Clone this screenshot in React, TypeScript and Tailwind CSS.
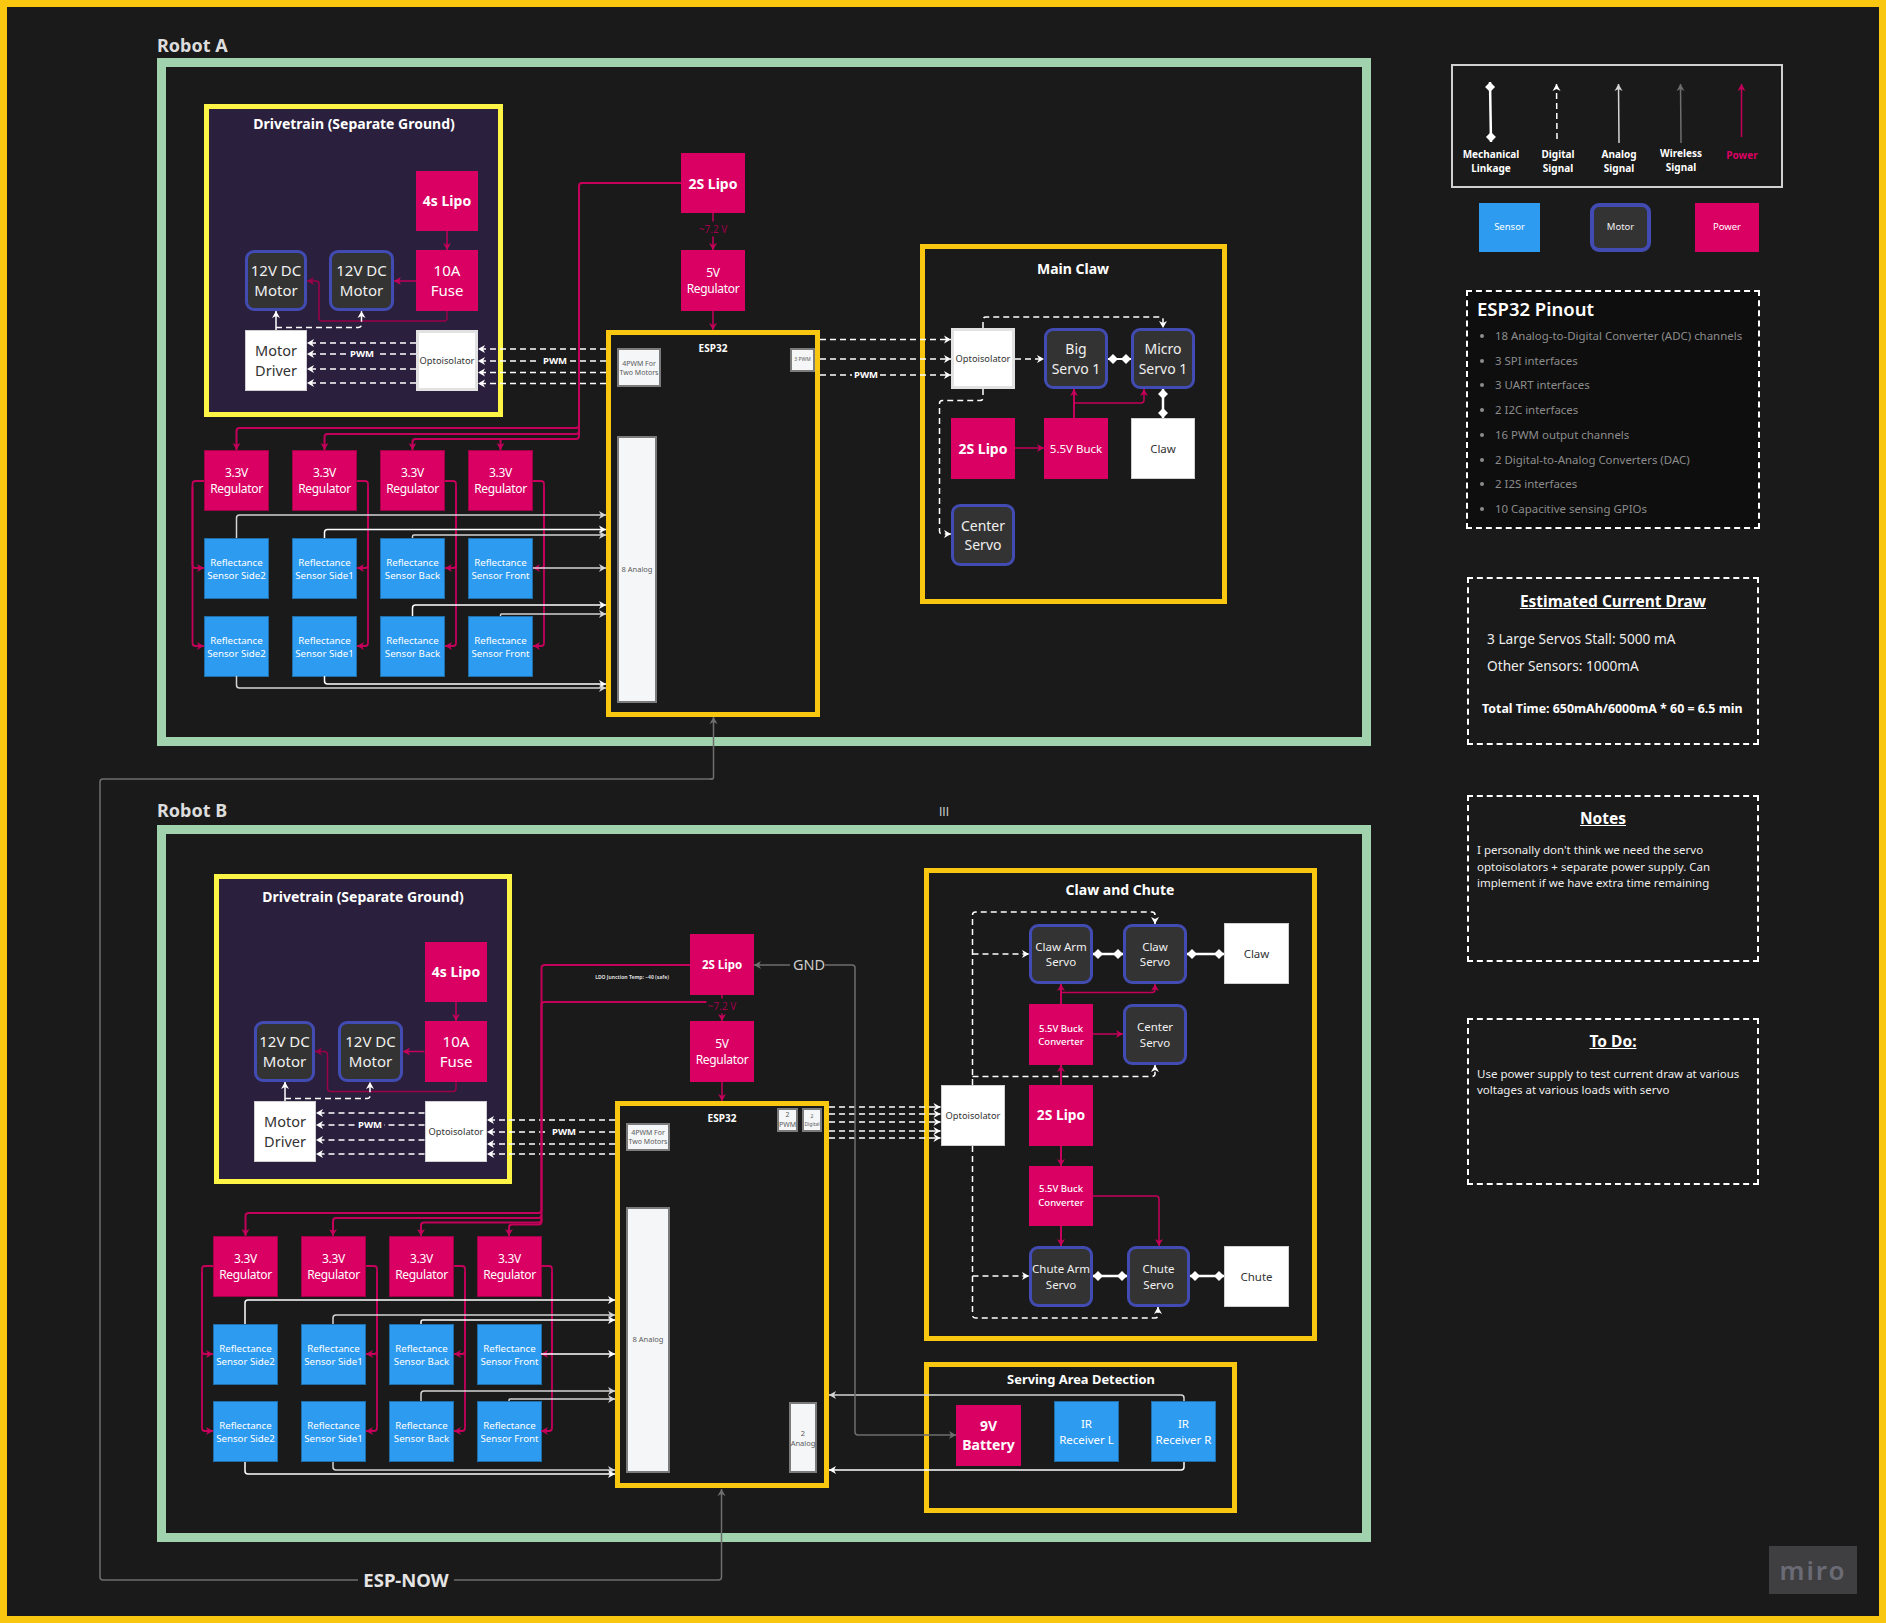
import React from "react";

type Pt = [number, number];
type Conn = { p: Pt[]; c: string; w?: number; d?: boolean; e?: "a" | "d"; s?: "a" | "d"; r?: number };

const PK = "#c4005a";
const WH = "#ffffff";
const LG = "#d4d4d4";
const GR = "#6e6e6e";

function path(pts: Pt[], r = 3): string {
  let out = `M${pts[0][0]} ${pts[0][1]}`;
  for (let i = 1; i < pts.length; i++) {
    const [x, y] = pts[i];
    if (i === pts.length - 1) {
      out += ` L${x} ${y}`;
      break;
    }
    const [px, py] = pts[i - 1];
    const [nx, ny] = pts[i + 1];
    const l1 = Math.hypot(x - px, y - py) || 1;
    const l2 = Math.hypot(nx - x, ny - y) || 1;
    const rr = Math.min(r, l1 / 2, l2 / 2);
    const ax = x - ((x - px) / l1) * rr;
    const ay = y - ((y - py) / l1) * rr;
    const bx = x + ((nx - x) / l2) * rr;
    const by = y + ((ny - y) / l2) * rr;
    out += ` L${ax} ${ay} Q${x} ${y} ${bx} ${by}`;
  }
  return out;
}

function arrowHead(tip: Pt, from: Pt): string {
  const a = Math.atan2(tip[1] - from[1], tip[0] - from[0]);
  const rot = (x: number, y: number): string =>
    `${tip[0] + x * Math.cos(a) - y * Math.sin(a)},${tip[1] + x * Math.sin(a) + y * Math.cos(a)}`;
  return [rot(0, 0), rot(-7, 4), rot(-5, 0), rot(-7, -4)].join(" ");
}

function diamondAt(tip: Pt, from: Pt): string {
  const a = Math.atan2(tip[1] - from[1], tip[0] - from[0]);
  const cx = tip[0] - Math.cos(a) * 5;
  const cy = tip[1] - Math.sin(a) * 5;
  const h = 5;
  return `${cx + h},${cy} ${cx},${cy + h} ${cx - h},${cy} ${cx},${cy - h}`;
}

function Wire({ k }: { k: Conn }) {
  const { p, c, w = 1.5, d, e, s, r } = k;
  return (
    <g>
      <path d={path(p, r ?? 3)} fill="none" stroke={c} strokeWidth={w} strokeDasharray={d ? "6 4" : undefined} />
      {e === "a" && <polygon points={arrowHead(p[p.length - 1], p[p.length - 2])} fill={c} />}
      {e === "d" && <polygon points={diamondAt(p[p.length - 1], p[p.length - 2])} fill={c} />}
      {s === "a" && <polygon points={arrowHead(p[0], p[1])} fill={c} />}
      {s === "d" && <polygon points={diamondAt(p[0], p[1])} fill={c} />}
    </g>
  );
}

const hDash = (x1: number, x2: number, ys: number[]): Conn[] =>
  ys.map((y) => ({ p: [[x1, y], [x2, y]] as Pt[], c: WH, w: 1.5, d: true, e: "a" as const }));

const mech = (a: Pt, b: Pt, w = 2.5): Conn => ({ p: [a, b], c: WH, w, e: "d", s: "d" });

function sensorPower(left: number, right: number[], railL: number, railR: number[], yOut: number, y1: number, y2: number): Conn[] {
  const out: Conn[] = [
    { p: [[left, yOut], [railL, yOut], [railL, y1], [left, y1]], c: PK, w: 1.8, e: "a" },
    { p: [[railL, yOut + 6], [railL, y2], [left, y2]], c: PK, w: 1.8, e: "a" },
  ];
  right.forEach((x, i) => {
    out.push({ p: [[x, yOut], [railR[i], yOut], [railR[i], y1], [x, y1]], c: PK, w: 1.8, e: "a" });
    out.push({ p: [[railR[i], yOut + 6], [railR[i], y2], [x, y2]], c: PK, w: 1.8, e: "a" });
  });
  return out;
}

const conns: Conn[] = [
  // ---- ESP-NOW link
  { p: [[713, 779], [100, 779], [100, 1580], [358, 1580]], c: GR, w: 1.5 },
  { p: [[710, 779], [713.5, 779], [713.5, 717]], c: GR, w: 1.5, e: "a" },
  { p: [[454, 1580], [721.5, 1580], [721.5, 1489]], c: GR, w: 1.5, e: "a" },

  // ---- Robot A drivetrain
  { p: [[447, 231], [447, 250]], c: PK, e: "a" },
  { p: [[416, 281], [394, 281]], c: PK, w: 1.5, e: "a" },
  { p: [[447, 311], [447, 321], [319, 321], [319, 281], [307, 281]], c: "#9a0048", w: 1.5, e: "a" },
  { p: [[276, 330], [276, 311]], c: WH, e: "a" },
  { p: [[276, 327.5], [361.5, 327.5], [361.5, 311]], c: WH, d: true, e: "a" },
  ...hDash(416, 307, [343, 354, 369, 383]),
  ...hDash(606, 478, [349, 361, 372.5, 383.5]),
  ...hDash(820, 951, [339.5, 359, 375]),

  // ---- Robot A main power
  { p: [[681, 183], [579, 183], [579, 428], [236.5, 428], [236.5, 450]], c: PK, w: 2, e: "a" },
  { p: [[579, 425], [579, 434], [324.5, 434], [324.5, 450]], c: PK, w: 2, e: "a" },
  { p: [[579, 430], [579, 439], [412.5, 439], [412.5, 450]], c: PK, w: 2, e: "a" },
  { p: [[500.5, 439], [500.5, 450]], c: PK, w: 2, e: "a" },
  { p: [[713, 213], [713, 250]], c: PK, e: "a" },
  { p: [[713, 311], [713, 330]], c: PK, e: "a" },
  ...sensorPower(204, [357, 445, 533], 192.5, [368, 456, 544], 481, 568, 646),

  // ---- Robot A signals
  { p: [[236.5, 538], [236.5, 515], [606, 515]], c: LG, w: 1.5, e: "a" },
  { p: [[324.5, 538], [324.5, 529.5], [606, 529.5]], c: WH, w: 1.5, e: "a" },
  { p: [[412.5, 538], [412.5, 535], [606, 535]], c: LG, w: 1.5, e: "a" },
  { p: [[533, 568], [606, 568]], c: LG, w: 1.5, e: "a" },
  { p: [[412.5, 616], [412.5, 605], [606, 605]], c: WH, w: 1.5, e: "a" },
  { p: [[500.5, 616], [500.5, 614], [606, 614]], c: LG, w: 1.5, e: "a" },
  { p: [[324.5, 676], [324.5, 684], [606, 684]], c: WH, w: 1.5, e: "a" },
  { p: [[236.5, 676], [236.5, 688], [606, 688]], c: LG, w: 1.5, e: "a" },

  // ---- Main claw
  { p: [[1015, 359], [1044, 359]], c: WH, d: true, e: "a" },
  { p: [[983, 328], [983, 317], [1163, 317], [1163, 328]], c: WH, d: true, e: "a" },
  { p: [[983, 389], [983, 400.5], [939.5, 400.5], [939.5, 534], [951, 534]], c: WH, d: true, e: "a" },
  mech([1108, 359], [1131, 359], 2),
  mech([1163, 389], [1163, 418]),
  { p: [[1074, 418], [1074, 389]], c: PK, w: 2, e: "a" },
  { p: [[1074, 403], [1144, 403], [1144, 389]], c: PK, e: "a" },
  { p: [[1015, 448], [1044, 448]], c: PK, e: "a" },

  // ---- Robot B drivetrain
  { p: [[456, 1002], [456, 1021]], c: PK, e: "a" },
  { p: [[424.5, 1051.5], [403, 1051.5]], c: PK, e: "a" },
  { p: [[456, 1082], [456, 1091.5], [327.5, 1091.5], [327.5, 1051.5], [315, 1051.5]], c: "#9a0048", e: "a" },
  { p: [[285, 1101], [285, 1082]], c: WH, e: "a" },
  { p: [[285, 1098.5], [370, 1098.5], [370, 1082]], c: WH, d: true, e: "a" },
  ...hDash(424.5, 316, [1113, 1125, 1140, 1154]),
  ...hDash(615, 487, [1120, 1132, 1144, 1154]),
  ...hDash(829, 940.5, [1107, 1114, 1122, 1131, 1138]),

  // ---- Robot B power
  { p: [[690, 965], [541.5, 965], [541.5, 1213], [245.5, 1213], [245.5, 1236]], c: PK, w: 2, e: "a" },
  { p: [[706.5, 1002], [541.5, 1002], [541.5, 1218], [333, 1218], [333, 1236]], c: PK, w: 2, e: "a" },
  { p: [[541.5, 1215], [541.5, 1222.5], [421, 1222.5], [421, 1236]], c: PK, w: 2, e: "a" },
  { p: [[541.5, 1218], [541.5, 1224.5], [509, 1224.5], [509, 1236]], c: PK, w: 2, e: "a" },
  { p: [[722, 995], [722, 1021]], c: PK, e: "a" },
  { p: [[722, 1082], [722, 1101]], c: PK, e: "a" },
  ...sensorPower(213, [366, 454, 541], 202, [377, 465, 552], 1266, 1354, 1431),

  // ---- Robot B signals
  { p: [[245, 1324], [245, 1300], [615, 1300]], c: WH, w: 1.5, e: "a" },
  { p: [[333, 1324], [333, 1315], [615, 1315]], c: LG, w: 1.5, e: "a" },
  { p: [[421, 1324], [421, 1320], [615, 1320]], c: WH, w: 1.5, e: "a" },
  { p: [[541, 1354], [615, 1354]], c: WH, w: 1.5, e: "a" },
  { p: [[421, 1401], [421, 1391], [615, 1391]], c: LG, w: 1.5, e: "a" },
  { p: [[509, 1401], [509, 1399], [615, 1399]], c: LG, w: 1.5, e: "a" },
  { p: [[333, 1462], [333, 1470], [615, 1470]], c: LG, w: 1.5, e: "a" },
  { p: [[245, 1462], [245, 1474], [615, 1474]], c: WH, w: 1.5, e: "a" },

  // ---- Claw and chute
  { p: [[972.5, 1085], [972.5, 912], [1155, 912], [1155, 924]], c: WH, d: true, e: "a" },
  { p: [[972.5, 954], [1029, 954]], c: WH, d: true, e: "a" },
  { p: [[972.5, 1076.5], [1155, 1076.5], [1155, 1065]], c: WH, d: true, e: "a" },
  { p: [[972.5, 1146], [972.5, 1318], [1158, 1318], [1158, 1307]], c: WH, d: true, e: "a" },
  { p: [[972.5, 1276], [1029, 1276]], c: WH, d: true, e: "a" },
  { p: [[1061, 1085], [1061, 1065]], c: PK, w: 2, e: "a" },
  { p: [[1061, 1004], [1061, 984]], c: PK, w: 2, e: "a" },
  { p: [[1061, 992.5], [1155, 992.5], [1155, 984]], c: PK, e: "a" },
  { p: [[1093, 1034], [1123, 1034]], c: PK, e: "a" },
  { p: [[1061, 1146], [1061, 1166]], c: PK, w: 2, e: "a" },
  { p: [[1061, 1226], [1061, 1246]], c: PK, w: 2, e: "a" },
  { p: [[1093, 1196], [1159, 1196], [1159, 1246]], c: PK, e: "a" },
  mech([1093, 954], [1123, 954]),
  mech([1187, 954], [1224, 954]),
  mech([1093, 1276], [1127, 1276]),
  mech([1190, 1276], [1224, 1276]),

  // ---- Serving area + GND
  { p: [[1184, 1401], [1184, 1395], [829, 1395]], c: LG, w: 1.5, e: "a" },
  { p: [[1184, 1462], [1184, 1470], [829, 1470]], c: WH, w: 1.5, e: "a" },
  { p: [[790, 965], [754, 965]], c: GR, w: 1.5, e: "a" },
  { p: [[825, 965], [855, 965], [855, 1435], [956, 1435]], c: GR, w: 1.5, e: "a" },

  // ---- Legend
  mech([1490, 82], [1491, 142]),
  { p: [[1557, 139], [1556.5, 84]], c: WH, w: 1.5, d: true, e: "a" },
  { p: [[1619, 143], [1618.5, 84]], c: LG, w: 1.5, e: "a" },
  { p: [[1681, 143], [1680.5, 84]], c: GR, w: 1.5, e: "a" },
  { p: [[1741.5, 137], [1741.5, 84]], c: PK, w: 1.5, e: "a" },
];

const base = "absolute flex items-center justify-center text-center";
const cell = "flex items-center justify-center text-center shrink-0";
const power = "bg-[#da0063] text-white";
const sensor = "bg-[#2d9bf0] text-white border border-[#1f6ea8]";
const motor = "bg-[#333333] border-[3px] border-[#414bb2] rounded-[9px] text-[#f0f0f0]";
const white = "bg-white text-[#333333] border border-[#d0d0d0]";
const port = "bg-[#f5f6f8] text-[#5a5a5a] border-2 border-[#7b7b7b]";
const group = "absolute border-[5px] border-[#fac710]";
const frame = "absolute border-[9px] border-[#a0d2ae]";
const drive = "absolute border-[5px] border-[#fef445] bg-[#2a1f3d]";
const big = "text-[15px] leading-[20px] pb-[2px]";
const servo = "text-[14px] leading-[19.5px]";
const mid = "text-[12px] leading-[16px] tracking-[-0.3px]";
const small = "text-[9.7px] leading-[13px]";
const opto = "text-[9.3px]";
const lipo = "text-[14px] font-bold pb-[2px]";
const heading = "absolute -translate-x-1/2 -translate-y-1/2 whitespace-nowrap font-bold";
const noteBox = "border-2 border-dashed border-white";
const cellSize = "w-[65px] h-[61px]";

const sensorNames = ["Side2", "Side1", "Back", "Front"];

function SensorRow({ className }: { className: string }) {
  return (
    <div className={`flex gap-[23px] ${className}`}>
      {sensorNames.map((n) => (
        <div key={n} className={`${cell} ${sensor} ${small} ${cellSize} whitespace-nowrap`}>
          <span>Reflectance<br />Sensor {n}</span>
        </div>
      ))}
    </div>
  );
}

function Bank({ className, lastGap }: { className: string; lastGap: string }) {
  return (
    <div className={`absolute flex flex-col ${className}`}>
      <div className="flex gap-[23px]">
        {sensorNames.map((n) => (
          <div key={n} className={`${cell} ${power} ${mid} ${cellSize} border border-[#a00048]`}>
            <span>3.3V<br />Regulator</span>
          </div>
        ))}
      </div>
      <SensorRow className="mt-[27px]" />
      <SensorRow className={lastGap} />
    </div>
  );
}

const legendItems = [
  { w: "w-[64px]", t: "mt-0 text-white", a: "Mechanical", b: "Linkage" },
  { w: "w-[70px]", t: "mt-0 text-white", a: "Digital", b: "Signal" },
  { w: "w-[52px]", t: "mt-0 text-white", a: "Analog", b: "Signal" },
  { w: "w-[72px]", t: "mt-[-1px] text-white", a: "Wireless", b: "Signal" },
  { w: "w-[50px]", t: "mt-px text-[#da0063]", a: "Power", b: "" },
];

function Sidebar() {
  return (
    <div className="absolute left-[1451px] top-[64px] w-[332px] flex flex-col">
      <div className="h-[124px] border-2 border-[#d0d0d0] flex pl-[6px] pt-[82px]">
        {legendItems.map((l) => (
          <div key={l.a} className={`${l.w} ${l.t} text-center font-bold text-[10px] leading-[13.5px] whitespace-nowrap`}>
            {l.a}
            {l.b && <br />}
            {l.b}
          </div>
        ))}
      </div>

      <div className="flex mt-[15px] pl-[28px]">
        <div className={`${cell} bg-[#2d9bf0] text-[9.5px] w-[61px] h-[49px]`}>Sensor</div>
        <div className={`${cell} ml-[50px] bg-[#333333] border-[4px] border-[#414bb2] rounded-[9px] text-[9.5px] text-[#f0f0f0] w-[61px] h-[49px]`}>Motor</div>
        <div className={`${cell} ${power} ml-[44px] text-[9.5px] w-[64px] h-[49px]`}>Power</div>
      </div>

      <div className={`${noteBox} mt-[38px] ml-[15px] w-[294px] h-[239px] bg-[#0e0e0e] px-[9px] pt-[5px]`}>
        <div className="text-[18.5px] leading-[24px] font-semibold">ESP32 Pinout</div>
        <ul className="mt-[3px] text-[11.45px] leading-[24.7px] text-[#8c8c8c] list-disc pl-[18px] marker:text-[#8c8c8c] whitespace-nowrap">
          <li>18 Analog-to-Digital Converter (ADC) channels</li>
          <li>3 SPI interfaces</li>
          <li>3 UART interfaces</li>
          <li>2 I2C interfaces</li>
          <li>16 PWM output channels</li>
          <li>2 Digital-to-Analog Converters (DAC)</li>
          <li>2 I2S interfaces</li>
          <li>10 Capacitive sensing GPIOs</li>
        </ul>
      </div>

      <div className={`${noteBox} mt-[48px] ml-[16px] w-[292px] h-[168px]`}>
        <div className="mt-[12px] text-center text-[15.5px] leading-[20px] font-bold underline">Estimated Current Draw</div>
        <div className="mt-[15px] ml-[18px] text-[13.7px] leading-[26.5px] text-[#eeeeee]">3 Large Servos Stall: 5000 mA<br />Other Sensors: 1000mA</div>
        <div className="mt-[22px] ml-[13px] text-[12.4px] leading-[16px] font-bold whitespace-nowrap">Total Time: 650mAh/6000mA * 60 = 6.5 min</div>
      </div>

      <div className={`${noteBox} mt-[50px] ml-[16px] w-[292px] h-[167px]`}>
        <div className="mt-[11px] mr-[20px] text-center text-[15.5px] leading-[20px] font-bold underline">Notes</div>
        <div className="mt-[14px] ml-[8px] text-[11.5px] leading-[16.5px] text-[#eeeeee] whitespace-nowrap">I personally don't think we need the servo<br />optoisolators + separate power supply. Can<br />implement if we have extra time remaining</div>
      </div>

      <div className={`${noteBox} mt-[56px] ml-[16px] w-[292px] h-[167px]`}>
        <div className="mt-[11px] text-center text-[15.5px] leading-[20px] font-bold underline">To Do:</div>
        <div className="mt-[15px] ml-[8px] text-[11.5px] leading-[16px] text-[#eeeeee] whitespace-nowrap">Use power supply to test current draw at various<br />voltages at various loads with servo</div>
      </div>
    </div>
  );
}

export default function App() {
  return (
    <div className="relative w-[1886px] h-[1623px] overflow-hidden bg-[#1a1a1a] font-['Noto_Sans',sans-serif] text-white border-[7px] border-[#fac710] box-border">
      <div className="absolute left-[-7px] top-[-7px] w-[1886px] h-[1623px]">
        {/* Robot A */}
        <div className="absolute left-[157px] top-[33px] text-[18px] leading-[24px] font-bold text-[#dddddd]">Robot A</div>
        <div className={`${frame} left-[157px] top-[58px] w-[1214px] h-[688px]`} />
        <div className={`${drive} left-[204px] top-[104px] w-[299px] h-[313px]`} />
        <div className={`${heading} left-[354px] top-[123px] text-[14px]`}>Drivetrain (Separate Ground)</div>
        <div className={`${base} ${power} ${lipo} left-[416px] top-[171px] w-[62px] h-[60px]`}>4s Lipo</div>
        <div className={`${base} ${power} ${big} left-[416px] top-[250px] w-[62px] h-[61px]`}>10A<br />Fuse</div>
        <div className={`${base} ${motor} ${big} left-[245px] top-[250px] w-[62px] h-[61px]`}>12V DC<br />Motor</div>
        <div className={`${base} ${motor} ${big} left-[329px] top-[250px] w-[65px] h-[61px]`}>12V DC<br />Motor</div>
        <div className={`${base} ${white} text-[14.5px] leading-[19.5px] left-[245px] top-[330px] w-[62px] h-[61px]`}>Motor<br />Driver</div>
        <div className={`${base} ${white} ${opto} border-[3px] border-[#e2e2e2] left-[416px] top-[330px] w-[62px] h-[61px]`}>Optoisolator</div>

        <div className={`${base} ${power} text-[14px] font-bold left-[681px] top-[153px] w-[64px] h-[60px]`}>2S Lipo</div>
        <div className={`${base} ${power} ${mid} left-[681px] top-[250px] w-[64px] h-[61px]`}>5V<br />Regulator</div>

        <div className={`${group} left-[606px] top-[330px] w-[214px] h-[387px]`} />
        <div className={`${heading} left-[713px] top-[348px] text-[10px]`}>ESP32</div>
        <div className={`${base} ${port} text-[7px] leading-[9px] left-[617px] top-[348px] w-[44px] h-[39px]`}>4PWM For<br />Two Motors</div>
        <div className={`${base} ${port} text-[5px] left-[790px] top-[348px] w-[25px] h-[24px]`}>3 PWM</div>
        <div className={`${base} ${port} text-[7.5px] left-[617px] top-[436px] w-[40px] h-[267px]`}>8 Analog</div>

        <Bank className="left-[204px] top-[450px]" lastGap="mt-[17px]" />

        {/* Main claw */}
        <div className={`${group} left-[920px] top-[244px] w-[307px] h-[360px]`} />
        <div className={`${heading} left-[1073px] top-[268px] text-[14px]`}>Main Claw</div>
        <div className={`${base} ${white} ${opto} border-[3px] border-[#e2e2e2] left-[951px] top-[328px] w-[64px] h-[61px]`}>Optoisolator</div>
        <div className={`${base} ${motor} ${servo} left-[1044px] top-[328px] w-[64px] h-[61px]`}>Big<br />Servo 1</div>
        <div className={`${base} ${motor} ${servo} left-[1131px] top-[328px] w-[64px] h-[61px]`}>Micro<br />Servo 1</div>
        <div className={`${base} ${power} text-[14px] font-bold left-[951px] top-[418px] w-[64px] h-[61px]`}>2S Lipo</div>
        <div className={`${base} ${power} text-[11.5px] left-[1044px] top-[418px] w-[64px] h-[61px]`}>5.5V Buck</div>
        <div className={`${base} ${white} text-[11.5px] left-[1131px] top-[418px] w-[64px] h-[61px]`}>Claw</div>
        <div className={`${base} ${motor} ${servo} left-[951px] top-[504px] w-[64px] h-[62px]`}>Center<br />Servo</div>

        <Sidebar />

        <div className="absolute left-[1769px] top-[1546px] w-[88px] h-[48px] bg-[#3f3f41] flex items-center justify-center text-[26px] tracking-[2px] font-semibold text-[#6b6b75]">miro</div>

        {/* Robot B */}
        <div className="absolute left-[157px] top-[798px] text-[18px] leading-[24px] font-bold text-[#dddddd]">Robot B</div>
        <div className="absolute left-[939px] top-[805px] text-[12px] leading-[14px] font-['Liberation_Sans',sans-serif] text-[#cccccc]">III</div>
        <div className={`${frame} left-[157px] top-[825px] w-[1214px] h-[717px]`} />
        <div className={`${drive} left-[214px] top-[874px] w-[298px] h-[310px]`} />
        <div className={`${heading} left-[363px] top-[896px] text-[14px]`}>Drivetrain (Separate Ground)</div>
        <div className={`${base} ${power} ${lipo} left-[425px] top-[942px] w-[62px] h-[60px]`}>4s Lipo</div>
        <div className={`${base} ${power} ${big} left-[425px] top-[1021px] w-[62px] h-[61px]`}>10A<br />Fuse</div>
        <div className={`${base} ${motor} ${big} left-[254px] top-[1021px] w-[61px] h-[61px]`}>12V DC<br />Motor</div>
        <div className={`${base} ${motor} ${big} left-[338px] top-[1021px] w-[65px] h-[61px]`}>12V DC<br />Motor</div>
        <div className={`${base} ${white} text-[14.5px] leading-[19.5px] left-[254px] top-[1101px] w-[62px] h-[61px]`}>Motor<br />Driver</div>
        <div className={`${base} ${white} ${opto} left-[425px] top-[1101px] w-[62px] h-[61px]`}>Optoisolator</div>

        <div className={`${base} ${power} text-[11.5px] font-bold left-[690px] top-[934px] w-[64px] h-[61px]`}>2S Lipo</div>
        <div className={`${base} ${power} ${mid} left-[690px] top-[1021px] w-[64px] h-[61px]`}>5V<br />Regulator</div>
        <div className={`${heading} left-[632px] top-[978px] text-[5px] text-[#dddddd]`}>LDO Junction Temp: ~40 (safe)</div>
        <div className={`${heading} left-[809px] top-[965px] font-normal text-[14.5px] text-[#cccccc]`}>GND</div>

        <div className={`${group} left-[615px] top-[1101px] w-[214px] h-[387px]`} />
        <div className={`${heading} left-[722px] top-[1118px] text-[10px]`}>ESP32</div>
        <div className={`${base} ${port} text-[7px] leading-[9px] left-[626px] top-[1123px] w-[44px] h-[28px]`}>4PWM For<br />Two Motors</div>
        <div className={`${base} ${port} text-[7px] leading-[10px] left-[777px] top-[1108px] w-[21px] h-[24px]`}>2<br />PWM</div>
        <div className={`${base} ${port} text-[5px] leading-[8px] left-[802px] top-[1108px] w-[20px] h-[24px]`}>2<br />Digital</div>
        <div className={`${base} ${port} text-[7.5px] left-[626px] top-[1207px] w-[44px] h-[266px]`}>8 Analog</div>
        <div className={`${base} ${port} text-[7.5px] leading-[10px] left-[789px] top-[1402px] w-[28px] h-[71px]`}>2<br />Analog</div>

        <Bank className="left-[213px] top-[1236px]" lastGap="mt-[16px]" />

        {/* Claw and chute */}
        <div className={`${group} left-[924px] top-[868px] w-[393px] h-[473px]`} />
        <div className={`${heading} left-[1120px] top-[889px] text-[14px]`}>Claw and Chute</div>
        <div className={`${base} ${motor} text-[11.5px] leading-[15px] left-[1029px] top-[924px] w-[64px] h-[60px]`}>Claw Arm<br />Servo</div>
        <div className={`${base} ${motor} text-[11.5px] leading-[15px] left-[1123px] top-[924px] w-[64px] h-[60px]`}>Claw<br />Servo</div>
        <div className={`${base} ${white} text-[11.5px] left-[1224px] top-[923px] w-[65px] h-[61px]`}>Claw</div>
        <div className={`${base} ${power} text-[9.5px] leading-[13px] font-medium left-[1029px] top-[1004px] w-[64px] h-[61px]`}>5.5V Buck<br />Converter</div>
        <div className={`${base} ${motor} text-[11.5px] leading-[16px] left-[1123px] top-[1004px] w-[64px] h-[61px]`}>Center<br />Servo</div>
        <div className={`${base} ${white} ${opto} left-[941px] top-[1085px] w-[64px] h-[61px]`}>Optoisolator</div>
        <div className={`${base} ${power} text-[13.8px] font-bold left-[1029px] top-[1085px] w-[64px] h-[61px]`}>2S Lipo</div>
        <div className={`${base} ${power} text-[9.5px] leading-[14px] font-medium left-[1029px] top-[1166px] w-[64px] h-[60px]`}>5.5V Buck<br />Converter</div>
        <div className={`${base} ${motor} text-[11.5px] leading-[16px] whitespace-nowrap left-[1029px] top-[1246px] w-[64px] h-[61px]`}>Chute Arm<br />Servo</div>
        <div className={`${base} ${motor} text-[11.5px] leading-[16px] left-[1127px] top-[1246px] w-[63px] h-[61px]`}>Chute<br />Servo</div>
        <div className={`${base} ${white} text-[11.5px] left-[1224px] top-[1246px] w-[65px] h-[61px]`}>Chute</div>

        {/* Serving area */}
        <div className={`${group} left-[924px] top-[1362px] w-[313px] h-[151px]`} />
        <div className={`${heading} left-[1081px] top-[1380px] text-[12.9px]`}>Serving Area Detection</div>
        <div className={`${base} ${power} text-[14px] leading-[19px] font-bold pb-[1px] left-[956px] top-[1405px] w-[65px] h-[61px]`}>9V<br />Battery</div>
        <div className={`${base} ${sensor} text-[11.5px] leading-[16px] left-[1054px] top-[1401px] w-[65px] h-[61px]`}>IR<br />Receiver L</div>
        <div className={`${base} ${sensor} text-[11.5px] leading-[16px] left-[1151px] top-[1401px] w-[65px] h-[61px]`}>IR<br />Receiver R</div>

        {/* Connectors */}
        <svg className="absolute left-0 top-0 w-[1886px] h-[1623px] pointer-events-none" viewBox="0 0 1886 1623">
          {conns.map((k, i) => <Wire key={i} k={k} />)}
        </svg>

        {/* Labels on lines */}
        <div className={`${heading} left-[362px] top-[354px] text-[9.5px] bg-[#2a1f3d] px-[2px]`}>PWM</div>
        <div className={`${heading} left-[555px] top-[361px] text-[9.5px] bg-[#1a1a1a] px-[3px]`}>PWM</div>
        <div className={`${heading} left-[866px] top-[375px] text-[9.5px] bg-[#1a1a1a] px-[2px]`}>PWM</div>
        <div className={`${heading} left-[370px] top-[1125px] text-[9.5px] bg-[#2a1f3d] px-[2px]`}>PWM</div>
        <div className={`${heading} left-[564px] top-[1132px] text-[9.5px] bg-[#1a1a1a] px-[3px]`}>PWM</div>
        <div className={`${heading} left-[713px] top-[229px] font-normal text-[10px] text-[#a0004c] bg-[#1a1a1a]`}>~7.2 V</div>
        <div className={`${heading} left-[722px] top-[1006px] font-normal text-[10px] text-[#a0004c] bg-[#1a1a1a]`}>~7.2 V</div>
        <div className={`${heading} left-[406px] top-[1580px] text-[18.5px] text-[#e4e4e4]`}>ESP-NOW</div>
      </div>
    </div>
  );
}
